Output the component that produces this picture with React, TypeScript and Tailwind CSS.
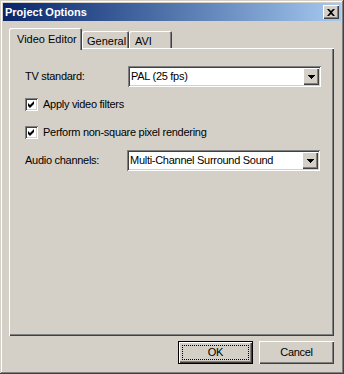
import React from 'react';

const raised = 'shadow-[inset_1px_1px_#ffffff,inset_-1px_-1px_#404040,inset_-2px_-2px_#808080]';
const sunken =
  'shadow-[inset_1px_1px_#808080,inset_-1px_-1px_#ffffff,inset_2px_2px_#404040,inset_-2px_-2px_#d4d0c8]';
const tabEdge = 'shadow-[inset_1px_1px_#ffffff,inset_-1px_0_#404040,inset_-2px_0_#808080]';

const Arrow = () => (
  <svg width="7" height="4" viewBox="0 0 7 4">
    <path d="M0 0h7v1H0zM1 1h5v1H1zM2 2h3v1H2zM3 3h1v1H3z" fill="#000" />
  </svg>
);

const Combo = ({ value }: { value: string }) => (
  <div className={`w-[193px] h-[21px] bg-white p-[2px] flex items-center ${sunken}`}>
    <span className="flex-1 pl-[1px] leading-none whitespace-nowrap">{value}</span>
    <div className={`w-[16px] h-[17px] bg-[#d4d0c8] flex items-center justify-center ${raised}`}>
      <Arrow />
    </div>
  </div>
);

const Check = ({ label }: { label: string }) => (
  <div className="flex items-center gap-[5px] h-[13px] leading-[13px]">
    <div className={`w-[13px] h-[13px] bg-white flex items-center justify-center ${sunken}`}>
      <svg width="7" height="7" viewBox="0 0 7 7">
        <path d="M6 0v3L2 7L0 5V2l2 2z" fill="#000" />
      </svg>
    </div>
    <span className="whitespace-nowrap">{label}</span>
  </div>
);

const App = () => {
  return (
    <div className="w-[344px] h-[374px] bg-[#d4d0c8] p-[3px] flex flex-col font-['Liberation_Sans',sans-serif] text-[11px] tracking-[-0.28px] text-black shadow-[inset_-1px_-1px_#404040,inset_1px_1px_#d4d0c8,inset_-2px_-2px_#808080,inset_2px_2px_#ffffff]">
      {/* title bar */}
      <div className="h-[18px] bg-linear-to-r from-[#0a246a] to-[#a6caf0] flex items-center justify-between pl-[2px] pr-[2px]">
        <span className="text-white font-bold text-[11px] tracking-normal">Project Options</span>
        <div className={`w-[16px] h-[14px] bg-[#d4d0c8] flex items-center justify-center ${raised}`}>
          <svg width="8" height="7" viewBox="0 0 8 7">
            <path d="M0 0h2l2 2l2-2h2L5 3.5L8 7H6L4 5L2 7H0l3-3.5z" fill="#000" />
          </svg>
        </div>
      </div>

      <div className="flex-1 flex flex-col pl-[6px] pr-[7px] pt-[7px]">
        {/* tabs */}
        <div className="h-[20px] flex items-end">
          <div className={`relative z-10 -mb-[2px] h-[22px] w-[73px] bg-[#d4d0c8] rounded-t-[2px] pl-[8px] pt-[3px] whitespace-nowrap tracking-normal ${tabEdge}`}>
            Video Editor
          </div>
          <div className={`h-[17px] w-[47px] rounded-t-[2px] pl-[5px] pt-[2px] whitespace-nowrap tracking-normal ${tabEdge}`}>
            General
          </div>
          <div className={`h-[17px] w-[43px] rounded-t-[2px] pl-[6px] pt-[2px] whitespace-nowrap tracking-normal ${tabEdge}`}>
            AVI
          </div>
        </div>

        {/* panel */}
        <div className={`h-[288px] pl-[16px] pt-[18px] flex flex-col ${raised}`}>
          <div className="flex items-center">
            <span className="w-[103px]">TV standard:</span>
            <Combo value="PAL (25 fps)" />
          </div>
          <div className="mt-[11px]">
            <Check label="Apply video filters" />
          </div>
          <div className="mt-[15px]">
            <Check label="Perform non-square pixel rendering" />
          </div>
          <div className="mt-[11px] flex items-center">
            <span className="w-[102px]">Audio channels:</span>
            <Combo value="Multi-Channel Surround Sound" />
          </div>
        </div>

        {/* buttons */}
        <div className="mt-[5px] flex justify-end gap-[6px]">
          <div className="w-[75px] h-[23px] border border-black bg-[#d4d0c8]">
            <div className={`w-full h-full p-[3px] ${raised}`}>
              <div className="w-full h-full border border-dotted border-black flex items-center justify-center">
                OK
              </div>
            </div>
          </div>
          <div className={`w-[75px] h-[23px] bg-[#d4d0c8] flex items-center justify-center ${raised}`}>
            Cancel
          </div>
        </div>
      </div>
    </div>
  );
};

export default App;
